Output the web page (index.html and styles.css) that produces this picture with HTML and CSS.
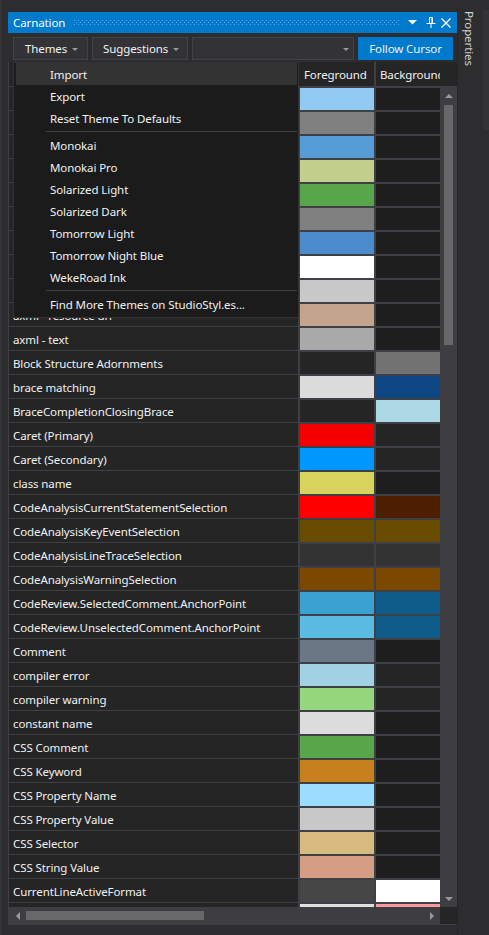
FILE: index.html
```html
<!DOCTYPE html>
<html>
<head>
<meta charset="utf-8">
<title>Carnation</title>
<link rel="stylesheet" href="styles.css">
</head>
<body>
<div class="screen">
  <div class="left-edge"></div>
  <div class="toolwin">
    <div class="titlebar">
      <span class="title">Carnation</span>
      <svg class="grip" height="5" width="100%">
        <defs>
          <pattern id="gripdots" width="4" height="4" patternUnits="userSpaceOnUse">
            <rect x="0" y="0" width="1" height="1" fill="#5eaae2"/>
            <rect x="2" y="2" width="1" height="1" fill="#5eaae2"/>
          </pattern>
        </defs>
        <rect x="0" y="0" width="100%" height="5" fill="url(#gripdots)"/>
      </svg>
      <span class="tb-icons">
        <svg class="ic ic-drop" width="9" height="5" viewBox="0 0 9 5"><polygon points="0,0 9,0 4.5,4.5" fill="#fff"/></svg>
        <svg class="ic ic-pin" width="10" height="11" viewBox="0 0 10 11"><path d="M3.5 0.5h3v6h-3z" fill="none" stroke="#fff" stroke-width="1"/><path d="M6 0.5v6" stroke="#fff" stroke-width="1.2"/><path d="M0.5 6.5h9" stroke="#fff" stroke-width="1"/><path d="M5 7v4" stroke="#fff" stroke-width="1"/></svg>
        <svg class="ic ic-x" width="10" height="10" viewBox="0 0 10 10"><path d="M0.5 0.5L9.5 9.5M9.5 0.5L0.5 9.5" stroke="#fff" stroke-width="1.4"/></svg>
      </span>
    </div>
    <div class="toolbar">
      <div class="btn btn-themes">Themes<span class="caret"></span></div>
      <div class="btn btn-sugg">Suggestions<span class="caret"></span></div>
      <div class="btn combo"><span class="caret"></span></div>
      <div class="btn follow">Follow Cursor</div>
    </div>
    <div class="grid">
      <div class="header">
        <div class="hname"></div>
        <div class="hcol">Foreground</div>
        <div class="hcol hbg">Background</div>
      </div>
      <div class="gbody">
        <div class="viewport" id="rows"></div>
        <div class="vscroll">
          <div class="arrow-area"><span class="tri-up"></span></div>
          <div class="vthumb"></div>
          <div class="vspace"></div>
          <div class="arrow-area"><span class="tri-down"></span></div>
        </div>
      </div>
      <div class="hscroll">
        <div class="harrow"><span class="tri-left"></span></div>
        <div class="hthumb"></div>
        <div class="hspace"></div>
        <div class="harrow"><span class="tri-right"></span></div>
        <div class="corner"></div>
      </div>
    </div>
    <div class="menu">
      <div class="mi active">Import</div>
      <div class="mi">Export</div>
      <div class="mi">Reset Theme To Defaults</div>
      <div class="msep"></div>
      <div class="mi">Monokai</div>
      <div class="mi">Monokai Pro</div>
      <div class="mi">Solarized Light</div>
      <div class="mi">Solarized Dark</div>
      <div class="mi">Tomorrow Light</div>
      <div class="mi">Tomorrow Night Blue</div>
      <div class="mi">WekeRoad Ink</div>
      <div class="msep"></div>
      <div class="mi">Find More Themes on StudioStyl.es...</div>
    </div>
  </div>
  <div class="sidetab"><span class="sidetext">Properties</span><div class="sidestrip"></div></div>
</div>
<script src="app.js"></script>
</body>
</html>
```
FILE: app.js
```js
var E = null;
var data = [
  ["axml - attribute name", "#92caf4", "#1e1e1e"],
  ["axml - attribute quotes", "#808080", "#1e1e1e"],
  ["axml - attribute value", "#569cd6", "#1e1e1e"],
  ["axml - CData section", "#c2d08c", "#1e1e1e"],
  ["axml - comment", "#57a64a", "#1e1e1e"],
  ["axml - delimiter", "#808080", "#1e1e1e"],
  ["axml - keyword", "#4a8ccc", "#1e1e1e"],
  ["axml - markup extension class", "#ffffff", "#1e1e1e"],
  ["axml - markup extension parameter", "#c8c8c8", "#1e1e1e"],
  ["axml - resource uri", "#c4a48c", "#1e1e1e"],
  ["axml - text", "#a9a9a9", "#1e1e1e"],
  ["Block Structure Adornments", E, "#727272"],
  ["brace matching", "#dbdbdb", "#0e4583"],
  ["BraceCompletionClosingBrace", E, "#add8e6"],
  ["Caret (Primary)", "#f50000", E],
  ["Caret (Secondary)", "#0097ff", E],
  ["class name", "#d7d35c", "#1e1e1e"],
  ["CodeAnalysisCurrentStatementSelection", "#ff0000", "#4d1e00"],
  ["CodeAnalysisKeyEventSelection", "#6a4c00", "#6a4c00"],
  ["CodeAnalysisLineTraceSelection", "#333333", "#333333"],
  ["CodeAnalysisWarningSelection", "#7b4800", "#7b4800"],
  ["CodeReview.SelectedComment.AnchorPoint", "#3ba1d3", "#0f5b89"],
  ["CodeReview.UnselectedComment.AnchorPoint", "#5cbbe2", "#0f5b89"],
  ["Comment", "#6b7785", "#1e1e1e"],
  ["compiler error", "#a0d2e3", E],
  ["compiler warning", "#95d77c", E],
  ["constant name", "#dcdcdc", "#1e1e1e"],
  ["CSS Comment", "#57a64a", "#1e1e1e"],
  ["CSS Keyword", "#c8801e", "#1e1e1e"],
  ["CSS Property Name", "#9cdcfe", "#1e1e1e"],
  ["CSS Property Value", "#c8c8c8", "#1e1e1e"],
  ["CSS Selector", "#d7ba7d", "#1e1e1e"],
  ["CSS String Value", "#d69d85", "#1e1e1e"],
  ["CurrentLineActiveFormat", "#464646", "#ffffff"],
  ["CurrentLineInactiveFormat", "#e0e0e0", "#ff9a9a"]
];
var host = document.getElementById("rows");
data.forEach(function (d) {
  var row = document.createElement("div");
  row.className = "row";
  var n = document.createElement("div");
  n.className = "name";
  n.textContent = d[0];
  row.appendChild(n);
  [d[1], d[2]].forEach(function (c) {
    var cell = document.createElement("div");
    cell.className = "cell";
    var sw = document.createElement("div");
    sw.className = c ? "swatch" : "swatch empty";
    if (c) sw.style.background = c;
    cell.appendChild(sw);
    row.appendChild(cell);
  });
  host.appendChild(row);
});
```
FILE: styles.css
```css
* { box-sizing: border-box; }
html, body { margin: 0; padding: 0; }
body {
  width: 489px;
  height: 935px;
  overflow: hidden;
  background: #2d2d30;
  font-family: "Noto Sans", "Open Sans", sans-serif;
  font-size: 11.5px;
  letter-spacing: -0.1px;
  color: #f1f1f1;
}
.screen {
  display: flex;
  height: 935px;
}
.left-edge {
  width: 8px;
  flex: none;
  background: #2d2d30;
  border-left: 2px solid #333337;
}
.toolwin {
  position: relative;
  width: 449px;
  flex: none;
  margin-top: 12px;
  height: 913px;
  display: flex;
  flex-direction: column;
}
.titlebar {
  height: 21px;
  background: #007acc;
  display: flex;
  align-items: center;
  padding-left: 5px;
  padding-right: 6px;
}
.title {
  color: #ffffff;
  line-height: 21px;
}
.grip {
  flex: 1;
  display: block;
  height: 5px;
  margin: 0 8px 0 9px;
}
.tb-icons {
  display: flex;
  align-items: center;
}
.ic { display: block; }
.ic-drop { margin-right: 9px; }
.ic-pin { margin-right: 5px; }
.toolbar {
  height: 29px;
  padding: 4px 4px 0 5px;
  display: flex;
  gap: 4px;
}
.btn {
  height: 23px;
  background: #333337;
  border: 1px solid #434346;
  display: flex;
  align-items: center;
  line-height: 21px;
  color: #f1f1f1;
}
.btn-themes { width: 75px; padding-left: 11px; }
.btn-sugg { width: 96px; padding-left: 10px; }
.combo { width: 162px; justify-content: flex-end; padding-right: 4px; }
.follow {
  width: 95px;
  background: #007acc;
  border-color: #007acc;
  justify-content: center;
  color: #f1f1f1;
}
.caret {
  width: 0;
  height: 0;
  border-left: 3px solid transparent;
  border-right: 3px solid transparent;
  border-top: 3px solid #999999;
  margin-left: 5px;
  margin-top: 1px;
}
.grid {
  flex: 1;
  display: flex;
  flex-direction: column;
  border-left: 1px solid #3f3f46;
  border-bottom: 1px solid #3f3f46;
}
.header {
  height: 25px;
  display: flex;
  background: #252526;
  border-bottom: 1px solid #3f3f46;
}
.hname {
  width: 290px;
  flex: none;
  border-right: 1px solid #3f3f46;
}
.hcol {
  width: 77px;
  flex: none;
  padding-left: 5px;
  padding-top: 2px;
  line-height: 22px;
  white-space: nowrap;
  overflow: hidden;
  border-right: 2px solid #3f3f46;
}
.hbg {
  width: 64px;
  padding-left: 4px;
  border-right: none;
}
.gbody {
  height: 820px;
  display: flex;
}
.viewport {
  width: 431px;
  flex: none;
  overflow: hidden;
  background: #252526;
}
.row {
  display: flex;
  height: 24px;
  width: 442px;
}
.name {
  width: 290px;
  flex: none;
  padding-left: 4px;
  padding-top: 2px;
  line-height: 21px;
  border-right: 1px solid #3f3f46;
  border-bottom: 1px solid #3f3f46;
  white-space: nowrap;
  overflow: hidden;
  background: #252526;
}
.cell {
  width: 76px;
  flex: none;
  background: #3f3f46;
  padding: 1px;
}
.swatch {
  width: 100%;
  height: 100%;
}
.swatch.empty { background: #252526; }
.vscroll {
  width: 17px;
  flex: none;
  background: #3e3e42;
  display: flex;
  flex-direction: column;
}
.arrow-area {
  height: 17px;
  flex: none;
  display: flex;
  align-items: center;
  justify-content: center;
}
.tri-up, .tri-down {
  width: 0;
  height: 0;
  border-left: 4px solid transparent;
  border-right: 4px solid transparent;
}
.tri-up { border-bottom: 4px solid #999999; }
.tri-down { border-top: 4px solid #999999; }
.vthumb {
  width: 9px;
  margin-left: 4px;
  margin-top: 1px;
  height: 240px;
  background: #686868;
  flex: none;
}
.vspace { flex: 1; }
.hscroll {
  height: 17px;
  display: flex;
  background: #3e3e42;
}
.harrow {
  width: 17px;
  flex: none;
  display: flex;
  align-items: center;
  justify-content: center;
}
.tri-left, .tri-right {
  width: 0;
  height: 0;
  border-top: 4px solid transparent;
  border-bottom: 4px solid transparent;
}
.tri-left { border-right: 4px solid #999999; }
.tri-right { border-left: 4px solid #999999; }
.hthumb {
  width: 178px;
  height: 9px;
  margin-top: 4px;
  background: #686868;
  flex: none;
}
.hspace { flex: 1; }
.corner {
  width: 17px;
  flex: none;
  background: #252526;
}
.menu {
  position: absolute;
  left: 5px;
  top: 50px;
  width: 286px;
  background: #1b1b1c;
  border: 1px solid #333337;
  padding: 0 1px 2px 2px;
}
.mi {
  height: 22px;
  line-height: 21px;
  padding-top: 1px;
  padding-left: 34px;
  color: #f1f1f1;
  white-space: nowrap;
}
.mi.active { background: #333334; }
.msep {
  height: 5px;
  margin-left: 30px;
  padding-top: 2px;
}
.msep::before {
  content: "";
  display: block;
  height: 1px;
  background: #3f3f46;
}
.sidetab {
  flex: 1;
  position: relative;
  display: flex;
  border-left: 1px solid #252526;
  margin-top: 10px;
}
.sidetext {
  writing-mode: vertical-rl;
  color: #d0d0d0;
  padding-left: 3px;
  margin-top: 1px;
  line-height: 16px;
  height: 60px;
}
.sidestrip {
  margin-left: auto;
  width: 6px;
  height: 120px;
  background: #333337;
}
```
